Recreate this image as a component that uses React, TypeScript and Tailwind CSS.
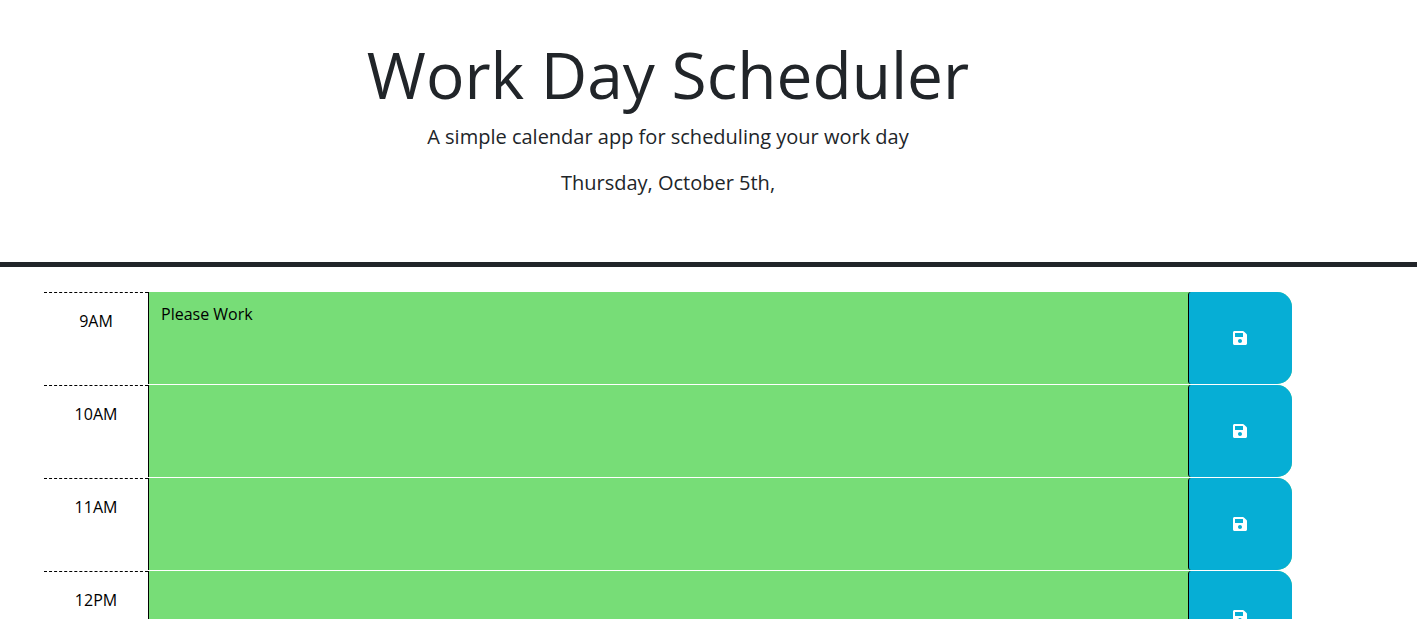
import { FaSave } from "react-icons/fa";

const hours = [
  { label: "9AM", text: "Please Work" },
  { label: "10AM", text: "" },
  { label: "11AM", text: "" },
  { label: "12PM", text: "" },
];

function TimeBlock({ label, text }: { label: string; text: string }) {
  const id = `hour-${label}`;
  return (
    <div className="mb-px grid h-[92px] grid-cols-12">
      <label
        htmlFor={id}
        className="border-t border-dashed border-black pt-4 text-center text-base leading-6 text-black"
      >
        {label}
      </label>
      <textarea
        id={id}
        defaultValue={text}
        className="col-span-10 block h-full w-full resize-none border-l border-black bg-[#77dd77] px-3 py-2.5 text-base leading-6 text-black outline-none"
      />
      <div className="grid rounded-r-[15px] bg-[#77dd77]">
        <button
          type="button"
          aria-label={`Save ${label}`}
          className="flex items-center justify-center rounded-l-[3px] rounded-r-[15px] border-l border-black bg-[#06aed5] pr-0.5 text-base text-white"
        >
          <FaSave aria-hidden="true" />
        </button>
      </div>
    </div>
  );
}

export default function App() {
  return (
    <div className="h-screen overflow-hidden bg-white font-['Open_Sans',sans-serif] font-normal text-[#212529]">
      <header className="border-b-[5px] border-[#212529] pt-9 pr-[81px] pb-16 text-center">
        <h1 className="mb-2 text-[64px] leading-[78px]">Work Day Scheduler</h1>
        <p className="mb-4 text-xl leading-[30px]">
          A simple calendar app for scheduling your work day
        </p>
        <p className="text-xl leading-[30px]">Thursday, October 5th,</p>
      </header>
      <main className="mt-[25px] mr-[125px] ml-11">
        {hours.map((hour) => (
          <TimeBlock key={hour.label} label={hour.label} text={hour.text} />
        ))}
      </main>
    </div>
  );
}
